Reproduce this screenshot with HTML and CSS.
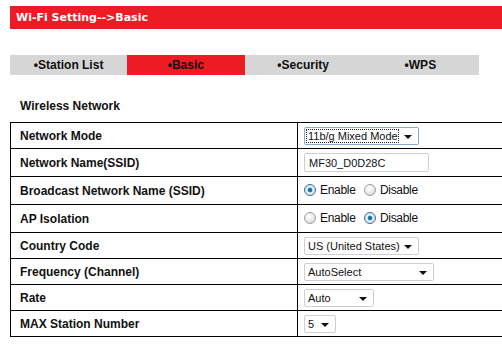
FILE: index.html
```html
<!DOCTYPE html>
<html lang="en">
<head>
    <meta charset="UTF-8">
    <title>Wi-Fi Setting - Basic</title>
    <link rel="stylesheet" href="styles.css">
</head>
<body>
    <div class="title-bar">Wi-Fi Setting--&gt;Basic</div>

    <ul class="tabs">
        <li><a href="#">&bull;Station List</a></li>
        <li class="active"><a href="#">&bull;Basic</a></li>
        <li><a href="#">&bull;Security</a></li>
        <li><a href="#">&bull;WPS</a></li>
    </ul>

    <h3 class="section">Wireless Network</h3>

    <table class="settings">
        <tr class="short">
            <td class="label">Network Mode</td>
            <td>
                <span class="select-wrap w-mode focused">
                    <select><option>11b/g Mixed Mode</option></select>
                </span>
            </td>
        </tr>
        <tr>
            <td class="label">Network Name(SSID)</td>
            <td><input type="text" class="text-in" value="MF30_D0D28C"></td>
        </tr>
        <tr>
            <td class="label">Broadcast Network Name (SSID)</td>
            <td class="radios">
                <label><input type="radio" name="bc" checked>Enable</label>
                <label><input type="radio" name="bc">Disable</label>
            </td>
        </tr>
        <tr>
            <td class="label">AP Isolation</td>
            <td class="radios">
                <label><input type="radio" name="ap">Enable</label>
                <label><input type="radio" name="ap" checked>Disable</label>
            </td>
        </tr>
        <tr class="short">
            <td class="label">Country Code</td>
            <td>
                <span class="select-wrap w-country">
                    <select><option>US (United States)</option></select>
                </span>
            </td>
        </tr>
        <tr class="short">
            <td class="label">Frequency (Channel)</td>
            <td>
                <span class="select-wrap w-freq">
                    <select><option>AutoSelect</option></select>
                </span>
            </td>
        </tr>
        <tr class="short">
            <td class="label">Rate</td>
            <td>
                <span class="select-wrap w-rate">
                    <select><option>Auto</option></select>
                </span>
            </td>
        </tr>
        <tr class="short">
            <td class="label">MAX Station Number</td>
            <td>
                <span class="select-wrap w-max">
                    <select><option>5</option></select>
                </span>
            </td>
        </tr>
    </table>
</body>
</html>
```

FILE: styles.css
```css
body {
    margin: 0;
    padding: 0;
    background: #fff;
    color: #111;
    font-family: 'Liberation Sans', Arial, sans-serif;
    font-size: 12px;
    overflow: hidden;
}

.title-bar {
    margin: 6px 0 0 10px;
    height: 23px;
    line-height: 23px;
    padding-left: 6px;
    background: #ed1c24;
    color: #fff;
    font-family: 'DejaVu Sans', Tahoma, sans-serif;
    font-size: 11px;
    font-weight: bold;
}

.tabs {
    list-style: none;
    margin: 26px 0 0 10px;
    padding: 0;
    width: 469px;
    display: flex;
    background: #d6d6d6;
}

.tabs li {
    flex: 1;
    height: 20px;
    line-height: 20px;
    text-align: center;
}

.tabs li a {
    color: #111;
    text-decoration: none;
    font-weight: bold;
    font-size: 12px;
}

.tabs li.active {
    background: #ed1c24;
}

.section {
    margin: 0;
    padding: 24px 0 0 20px;
    height: 23px;
    font-size: 12px;
    font-weight: bold;
    line-height: 14px;
}

.settings {
    margin-left: 10px;
    width: 492px;
    border-collapse: collapse;
}

.settings td {
    border: 1px solid #000;
    height: 27px;
    padding: 0 0 0 8px;
    vertical-align: middle;
}

.settings tr.short td {
    height: 25px;
}

.settings td.label {
    width: 277px;
    font-weight: bold;
    font-size: 12px;
    padding-left: 9px;
}

.settings tr td:last-child {
    border-right: none;
    padding-left: 6px;
}

.select-wrap {
    position: relative;
    display: inline-block;
    height: 18px;
    vertical-align: middle;
}

.select-wrap select {
    -webkit-appearance: none;
    appearance: none;
    width: 100%;
    height: 18px;
    margin: 0;
    padding: 0 0 0 3px;
    border: 1px solid #cfcfcf;
    border-radius: 2px;
    background: #fff;
    color: #111;
    font-family: 'Liberation Sans', Arial, sans-serif;
    font-size: 11px;
    line-height: 16px;
}

.select-wrap::after {
    content: "";
    position: absolute;
    right: 7px;
    top: 8px;
    border-left: 4px solid transparent;
    border-right: 4px solid transparent;
    border-top: 4px solid #111;
    pointer-events: none;
}

.select-wrap.focused select {
    border-color: #8aa8cc;
}

.select-wrap.focused::before {
    content: "";
    position: absolute;
    left: 2px;
    top: 2px;
    bottom: 2px;
    right: 20px;
    border: 1px dotted #222;
    pointer-events: none;
}

.w-mode { width: 115px; }
.w-country { width: 115px; }
.w-freq { width: 130px; }
.w-rate { width: 70px; }
.w-max { width: 32px; }

.text-in {
    width: 125px;
    height: 19px;
    box-sizing: border-box;
    margin: 0;
    padding: 0 4px;
    border: 1px solid #cfcfcf;
    border-radius: 2px;
    font-family: 'Liberation Sans', Arial, sans-serif;
    font-size: 11px;
    color: #111;
    vertical-align: middle;
}

.radios label {
    display: inline-flex;
    align-items: center;
    margin-right: 5px;
    font-size: 12px;
    letter-spacing: -0.3px;
}

.radios input[type="radio"] {
    -webkit-appearance: none;
    appearance: none;
    width: 12px;
    height: 12px;
    margin: 0 4px 0 0;
    border: 1px solid #a0a0a0;
    border-radius: 50%;
    background: radial-gradient(circle at 40% 35%, #fff 0, #e8e8e8 55%, #c8c8c8 100%);
}

.radios input[type="radio"]:checked {
    border-color: #3a6f9a;
    background: radial-gradient(circle, #0c5d9c 0, #1a86c8 28%, #e9eef3 38%, #cfd8df 100%);
}
```
